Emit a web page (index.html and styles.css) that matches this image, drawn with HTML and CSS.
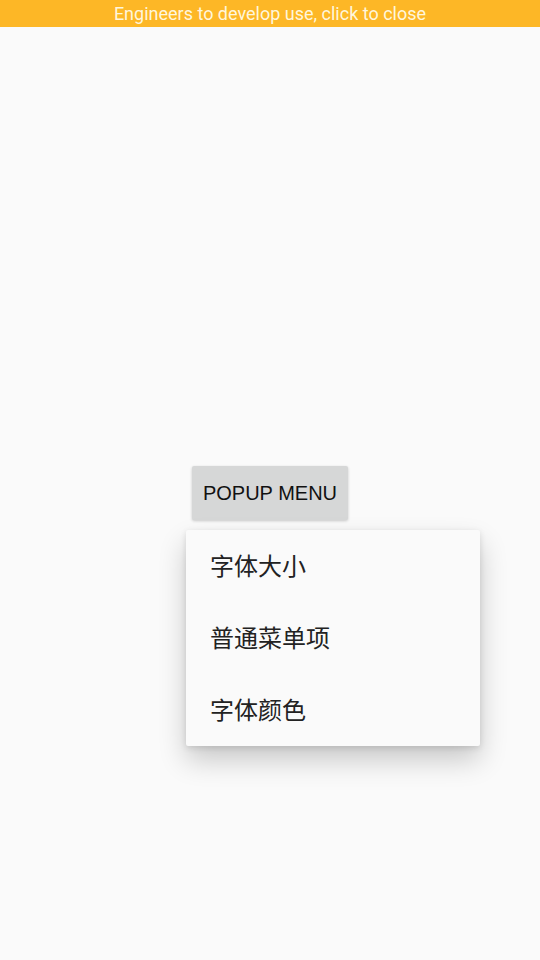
FILE: index.html
```html
<!DOCTYPE html>
<html>
<head>
<meta charset="utf-8">
<link rel="stylesheet" href="styles.css">
</head>
<body>
<div class="topbar">Engineers to develop use, click to close</div>
<main class="content">
  <div class="btn-row">
    <button class="popup-btn">POPUP MENU</button>
  </div>
  <ul class="menu">
    <li class="menu-item">字体大小</li>
    <li class="menu-item">普通菜单项</li>
    <li class="menu-item">字体颜色</li>
  </ul>
</main>
</body>
</html>
```
FILE: styles.css
```css
html, body {
  margin: 0;
  padding: 0;
  background: #fafafa;
  width: 540px;
  height: 960px;
  overflow: hidden;
  font-family: Roboto, "Noto Sans CJK SC", sans-serif;
}
.topbar {
  height: 27px;
  line-height: 27px;
  background: #fdb726;
  color: #fff6dc;
  font-size: 18px;
  text-align: center;
}
.content {
  position: relative;
  height: 933px;
}
.btn-row {
  display: flex;
  justify-content: center;
  padding-top: 439px;
}
.popup-btn {
  width: 156px;
  height: 54px;
  border: none;
  border-radius: 2px;
  background: #d6d7d7;
  color: #111;
  font-family: "Liberation Sans", Arial, sans-serif;
  font-size: 20px;
  padding: 0;
  box-shadow: 0 1px 3px rgba(0,0,0,0.2);
}
.menu {
  position: absolute;
  left: 186px;
  top: 503px;
  width: 294px;
  margin: 0;
  padding: 0;
  list-style: none;
  background: #fafafa;
  border-radius: 2px;
  box-shadow: 0 14px 28px rgba(0,0,0,0.2), 0 2px 6px rgba(0,0,0,0.12);
}
.menu-item {
  height: 72px;
  line-height: 70px;
  padding-left: 24px;
  font-family: "Noto Sans CJK SC", sans-serif;
  font-size: 24px;
  color: #222;
}
```
